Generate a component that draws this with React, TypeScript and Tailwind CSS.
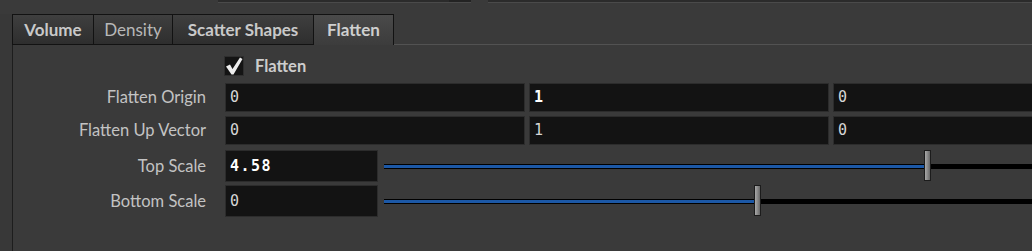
import React from "react";

const labelFont = { fontFamily: "Lato, 'Noto Sans', sans-serif" };
const monoFont = { fontFamily: "'DejaVu Sans Mono', 'Liberation Mono', monospace" };

function Field({ value, bold = false, className = "" }: { value: string; bold?: boolean; className?: string }) {
  return (
    <div
      className={`h-full shrink-0 bg-[#131313] border border-[#2c2c2c] flex items-center pl-[4px] text-[15px] tracking-[1.5px] ${
        bold ? "font-bold text-white" : "text-[#d6d6d6]"
      } ${className}`}
      style={monoFont}
    >
      {value}
    </div>
  );
}

function Label({ text }: { text: string }) {
  return <div className="w-[193px] shrink-0 text-right text-[16.5px] text-[#c3c3c3]">{text}</div>;
}

function VectorRow({ label, values }: { label: string; values: { v: string; bold?: boolean }[] }) {
  return (
    <div className="flex items-center h-[29px]">
      <Label text={label} />
      <div className="ml-[19px] flex gap-[4px] h-full">
        {values.map((f, i) => (
          <Field key={i} value={f.v} bold={f.bold} className="w-[300px]" />
        ))}
      </div>
    </div>
  );
}

function SliderRow({ label, value, bold = false, pos }: { label: string; value: string; bold?: boolean; pos: number }) {
  return (
    <div className="flex items-center h-[32px]">
      <Label text={label} />
      <div className="ml-[19px] h-full">
        <Field value={value} bold={bold} className="w-[153px]" />
      </div>
      {/* slider */}
      <div className="relative ml-[6px] h-full w-[700px] shrink-0 flex items-center">
        <div className="w-full h-[5px] bg-black">
          <div className="h-[3px] mt-[1px] bg-[#1c58a6]" style={{ width: pos }} />
        </div>
        <div
          className="absolute top-0 h-[31px] w-[7px] border border-[#1c1c1c] bg-linear-to-r from-[#a8a8a8] via-[#8a8a8a] to-[#686868]"
          style={{ left: pos }}
        />
      </div>
    </div>
  );
}

export default function App() {
  return (
    <div className="w-[1032px] h-[251px] overflow-hidden bg-[#3a3a3a] flex flex-col" style={labelFont}>
      {/* bottom edge of fields above */}
      <div className="h-[14px] flex items-start shrink-0">
        <div className="ml-[218px] w-[253px] h-[3px] bg-[#2b2b2b] border-b border-[#4a4a4a] flex justify-end">
          <div className="w-[22px] h-full bg-[#232323]" />
        </div>
        <div className="ml-[17px] flex-1 h-[3px] bg-[#2b2b2b] border-b border-[#4a4a4a]" />
      </div>

      {/* tabs */}
      <div className="flex h-[31px] shrink-0">
        <div className="w-[12px] bg-[#383838]" />
        <div className="w-[82px] border border-[#121212] bg-linear-to-b from-[#3f3f3f] to-[#2e2e2e] flex items-center justify-center font-bold text-[17px] text-[#c9c9c9]">
          Volume
        </div>
        <div className="w-[79px] border-y border-r border-[#121212] bg-linear-to-b from-[#3f3f3f] to-[#2e2e2e] flex items-center justify-center text-[17px] text-[#b8b8b8]">
          Density
        </div>
        <div className="w-[141px] border-y border-r border-[#121212] bg-linear-to-b from-[#3f3f3f] to-[#2e2e2e] flex items-center justify-center font-bold text-[17px] text-[#c9c9c9]">
          Scatter Shapes
        </div>
        <div className="w-[80px] border-t border-r border-[#121212] bg-linear-to-b from-[#4a4a4a] to-[#3c3c3c] flex items-center justify-center font-bold text-[17px] text-[#cfcfcf]">
          Flatten
        </div>
        <div className="flex-1 border-b border-[#525252]" />
      </div>

      {/* panel */}
      <div className="flex flex-1">
        <div className="w-[12px] bg-[#383838] shrink-0" />
        <div className="flex-1 border-l border-[#1d1d1d] flex flex-col">
          <div className="flex items-center h-[20px] mt-[11px]">
            <div className="ml-[211px] w-[20px] h-[20px] bg-[#141414] border border-[#2e2e2e] flex items-center justify-center">
              <svg width="18" height="18" viewBox="0 0 18 18">
                <path d="M1 9.5 L5 7.5 L7.5 12 L15 0.5 L17.5 2 L8.5 17.5 L6.5 17.5 Z" fill="#ededed" />
              </svg>
            </div>
            <div className="ml-[11px] font-bold text-[16.5px] text-[#cdcdcd]">Flatten</div>
          </div>

          <div className="mt-[7px] flex flex-col">
            <VectorRow label="Flatten Origin" values={[{ v: "0" }, { v: "1", bold: true }, { v: "0" }]} />
            <div className="mt-[4px]">
              <VectorRow label="Flatten Up Vector" values={[{ v: "0" }, { v: "1" }, { v: "0" }]} />
            </div>
            <div className="mt-[5px]">
              <SliderRow label="Top Scale" value="4.58" bold pos={540} />
            </div>
            <div className="mt-[3px]">
              <SliderRow label="Bottom Scale" value="0" pos={370} />
            </div>
          </div>
        </div>
      </div>
    </div>
  );
}
